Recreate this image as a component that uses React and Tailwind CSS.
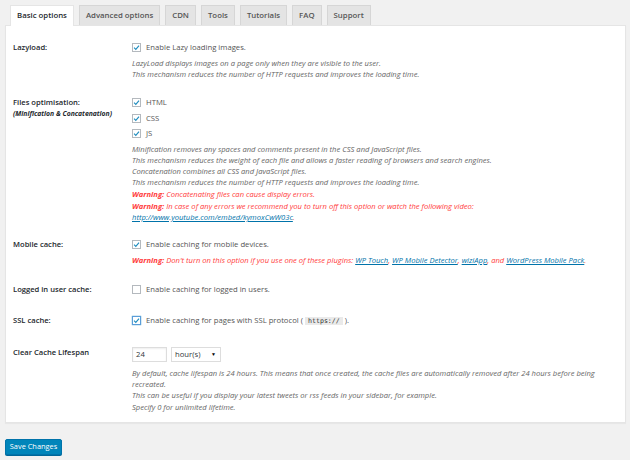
import React from 'react';

const font = { fontFamily: '"Open Sans", "Noto Sans", sans-serif' };

const tabs = ['Basic options', 'Advanced options', 'CDN', 'Tools', 'Tutorials', 'FAQ', 'Support'];

function Check({ checked, focus }) {
  return (
    <span
      className={`inline-flex items-center justify-center w-[9px] h-[9px] bg-white border shrink-0 ${
        focus ? 'border-[#5b9dd9] shadow-[0_0_1px_#1e8cbe]' : 'border-[#b4b9be]'
      }`}
    >
      {checked && (
        <svg viewBox="0 0 10 10" className="w-[7px] h-[7px]">
          <path d="M1.5 5.2 L4 7.6 L8.6 2.2" fill="none" stroke="#1e8cbe" strokeWidth="1.6" />
        </svg>
      )}
    </span>
  );
}

function CheckLine({ checked, focus, children, className = '' }) {
  return (
    <div className={`flex items-center gap-[5px] h-[11px] text-[7.7px] text-[#555] ${className}`}>
      <Check checked={checked} focus={focus} />
      <span>{children}</span>
    </div>
  );
}

function Desc({ children, className = '' }) {
  return <p className={`italic text-[7.6px] leading-[11px] text-[#666] ${className}`}>{children}</p>;
}

function Warn({ children, className = '' }) {
  return (
    <p className={`italic text-[7.6px] leading-[11px] text-[#ff3b3b] ${className}`}>
      <b className="font-bold">Warning:</b> {children}
    </p>
  );
}

function Row({ label, sub, children, className = '' }) {
  return (
    <div className={`flex ${className}`}>
      <div className="w-[120px] shrink-0 pl-[1px]">
        <div className="h-[11px] flex items-center text-[7.6px] font-semibold text-[#23282d]">{label}</div>
        {sub && <div className="text-[6.8px] italic font-bold text-[#23282d] leading-[11px]">{sub}</div>}
      </div>
      <div className="flex-1">{children}</div>
    </div>
  );
}

const A = ({ children }) => <a className="text-[#0073aa] underline">{children}</a>;

export default function App() {
  return (
    <div className="min-h-[460px] bg-[#f1f1f1] pt-[5px]" style={font}>
      <div className="flex gap-[5px] pl-[10px] h-[20px]">
        {tabs.map((t, i) => (
          <div
            key={t}
            className={`px-[6px] flex items-center text-[7.8px] font-semibold border border-b-0 ${
              i === 0
                ? 'bg-white border-[#e5e5e5] text-[#23282d] relative z-10 h-[21px]'
                : 'bg-[#e4e4e4] border-[#d6d6d6] text-[#555] h-[20px]'
            }`}
          >
            {t}
          </div>
        ))}
      </div>
      <div className="ml-[5px] mr-[4px] bg-white border border-[#e5e5e5] shadow-[0_1px_1px_rgba(0,0,0,0.04)] pt-[16px] pb-[9px] pl-[6px] pr-[6px]">
        <Row label="Lazyload:">
          <CheckLine checked>Enable Lazy loading images.</CheckLine>
          <Desc className="mt-[5px]">
            LazyLoad displays images on a page only when they are visible to the user.
            <br />
            This mechanism reduces the number of HTTP requests and improves the loading time.
          </Desc>
        </Row>

        <Row label="Files optimisation:" sub="(Minification & Concatenation)" className="mt-[17px]">
          <CheckLine checked>HTML</CheckLine>
          <CheckLine checked className="mt-[5px]">CSS</CheckLine>
          <CheckLine checked className="mt-[4px]">JS</CheckLine>
          <Desc className="mt-[5px]">
            Minification removes any spaces and comments present in the CSS and JavaScript files.
            <br />
            This mechanism reduces the weight of each file and allows a faster reading of browsers and search engines.
            <br />
            Concatenation combines all CSS and JavaScript files.
            <br />
            This mechanism reduces the number of HTTP requests and improves the loading time.
          </Desc>
          <Warn className="mt-[1px]">Concatenating files can cause display errors.</Warn>
          <Warn className="mt-[1px]">
            In case of any errors we recommend you to turn off this option or watch the following video:
            <br />
            <A>http://www.youtube.com/embed/kymoxCwW03c</A>.
          </Warn>
        </Row>

        <Row label="Mobile cache:" className="mt-[16px]">
          <CheckLine checked>Enable caching for mobile devices.</CheckLine>
          <Warn className="mt-[5px]">
            Don't turn on this option if you use one of these plugins: <A>WP Touch</A>, <A>WP Mobile Detector</A>,{' '}
            <A>wiziApp</A>, and <A>WordPress Mobile Pack</A>.
          </Warn>
        </Row>

        <Row label="Logged in user cache:" className="mt-[18px]">
          <CheckLine>Enable caching for logged in users.</CheckLine>
        </Row>

        <Row label="SSL cache:" className="mt-[20px]">
          <CheckLine checked focus>
            Enable caching for pages with SSL protocol (
            <code
              className="bg-[#eaeaea] px-[3px] mx-[2px] text-[6.6px] text-[#333]"
              style={{ fontFamily: '"DejaVu Sans Mono", monospace' }}
            >
              https://
            </code>
            ).
          </CheckLine>
        </Row>

        <Row label="Clear Cache Lifespan" className="mt-[21px]">
          <div className="flex gap-[4px] h-[15px]">
            <div className="w-[35px] border border-[#ddd] shadow-[inset_0_1px_2px_rgba(0,0,0,0.07)] flex items-center pl-[3px] text-[7.7px] text-[#32373c]">
              24
            </div>
            <div className="w-[50px] border border-[#ddd] flex items-center justify-between pl-[3px] pr-[4px] text-[7.7px] text-[#32373c]">
              <span>hour(s)</span>
              <span className="text-[5px] text-black">▼</span>
            </div>
          </div>
          <Desc className="mt-[6px] pr-[14px]">
            By default, cache lifespan is 24 hours. This means that once created, the cache files are automatically removed after 24 hours before being recreated.
            <br />
            This can be useful if you display your latest tweets or rss feeds in your sidebar, for example.
          </Desc>
          <Desc className="mt-[1px]">Specify 0 for unlimited lifetime.</Desc>
        </Row>
      </div>

      <button className="ml-[5px] mt-[16px] h-[16px] w-[57px] bg-[#0085ba] border border-[#0073aa] rounded-[2px] text-white text-[7.4px] shadow-[0_1px_0_#006799]">
        Save Changes
      </button>
    </div>
  );
}
